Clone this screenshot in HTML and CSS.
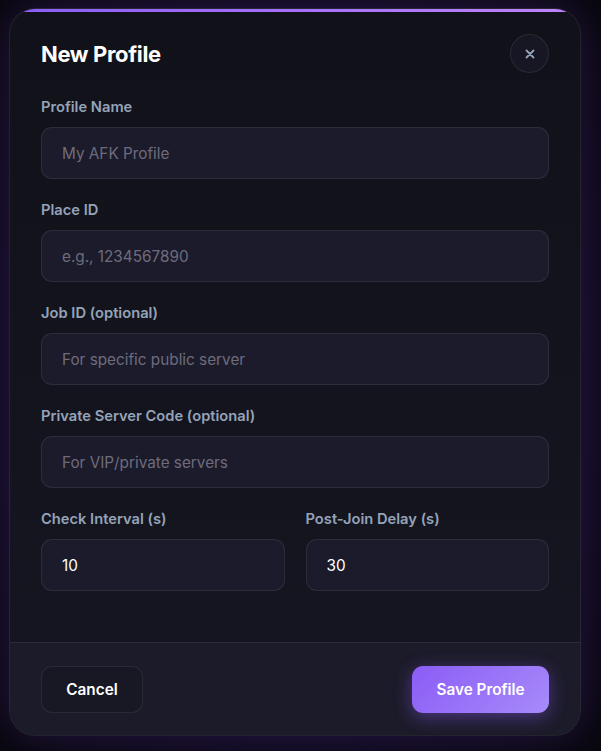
FILE: index.html
```html
<!DOCTYPE html>
<html lang="en">
<head>
    <meta charset="UTF-8">
    <meta name="viewport" content="width=device-width, initial-scale=1.0">
    <title>New Profile</title>
    <link rel="stylesheet" href="styles.css">
</head>
<body>
    <div class="modal">
        <div class="modal-header">
            <h2>New Profile</h2>
            <button class="close-btn" type="button" aria-label="Close">
                <svg width="10" height="10" viewBox="0 0 10 10">
                    <path d="M1.5 1.5 L8.5 8.5 M8.5 1.5 L1.5 8.5" stroke="#94a3b8" stroke-width="1.8" stroke-linecap="round"/>
                </svg>
            </button>
        </div>
        <form class="modal-body">
            <div class="form-group">
                <label for="profileName">Profile Name</label>
                <input type="text" id="profileName" placeholder="My AFK Profile">
            </div>
            <div class="form-group">
                <label for="placeId">Place ID</label>
                <input type="text" id="placeId" placeholder="e.g., 1234567890">
            </div>
            <div class="form-group">
                <label for="jobId">Job ID (optional)</label>
                <input type="text" id="jobId" placeholder="For specific public server">
            </div>
            <div class="form-group">
                <label for="privateCode">Private Server Code (optional)</label>
                <input type="text" id="privateCode" placeholder="For VIP/private servers">
            </div>
            <div class="form-row">
                <div class="form-group">
                    <label for="checkInterval">Check Interval (s)</label>
                    <input type="number" id="checkInterval" value="10">
                </div>
                <div class="form-group">
                    <label for="joinDelay">Post-Join Delay (s)</label>
                    <input type="number" id="joinDelay" value="30">
                </div>
            </div>
        </form>
        <div class="modal-footer">
            <button class="btn btn-cancel" type="button">Cancel</button>
            <button class="btn btn-save" type="button">Save Profile</button>
        </div>
    </div>
</body>
</html>
```

FILE: styles.css
```css
* {
    box-sizing: border-box;
}
body {
    font-family: Inter, "Noto Sans", sans-serif;
    margin: 0;
    padding: 8px 0 0 9px;
    height: 751px;
    overflow: hidden;
    background: radial-gradient(ellipse at 50% 50%, #1b1030 0%, #120b22 55%, #08070d 100%);
}
.modal {
    position: relative;
    width: 572px;
    height: 728px;
    display: flex;
    flex-direction: column;
    background: linear-gradient(180deg, #111119 0%, #161622 100%);
    border: 1px solid rgba(255, 255, 255, 0.08);
    border-radius: 26px;
    overflow: hidden;
    box-shadow: 0 0 40px rgba(110, 60, 200, 0.25);
}
.modal::before {
    content: "";
    position: absolute;
    top: 0;
    left: 0;
    right: 0;
    height: 3px;
    background: linear-gradient(90deg, #8b5cf6, #c084fc);
}
.modal-header {
    display: flex;
    justify-content: space-between;
    align-items: center;
    padding: 25px 31px 0 31px;
}
.modal-header h2 {
    margin: 0;
    font-size: 22px;
    font-weight: 700;
    letter-spacing: -0.35px;
    color: #fff;
}
.close-btn {
    width: 39px;
    height: 39px;
    border-radius: 50%;
    border: 1px solid rgba(255, 255, 255, 0.08);
    background: #171724;
    display: flex;
    align-items: center;
    justify-content: center;
    padding: 0;
    cursor: pointer;
}
.modal-body {
    flex: 1;
    margin: 0;
    padding: 24px 31px 0 31px;
}
.form-group {
    margin-bottom: 21px;
}
.form-row {
    display: grid;
    grid-template-columns: 1fr 1fr;
    gap: 21px;
}
label {
    display: block;
    height: 20px;
    line-height: 20px;
    margin-bottom: 10px;
    font-size: 14.7px;
    font-weight: 600;
    color: #94a3b8;
}
input {
    display: block;
    width: 100%;
    height: 52px;
    padding: 0 20px;
    background: #1c1b2b;
    border: 1px solid rgba(255, 255, 255, 0.08);
    border-radius: 11px;
    font-family: inherit;
    font-size: 15.3px;
    color: #fff;
    outline: none;
    -moz-appearance: textfield;
}
input::placeholder {
    color: #6e6c7c;
}
input::-webkit-outer-spin-button,
input::-webkit-inner-spin-button {
    -webkit-appearance: none;
    margin: 0;
}
.modal-footer {
    display: flex;
    justify-content: space-between;
    align-items: center;
    height: 93px;
    padding: 0 31px;
    background: #1c1b29;
    border-top: 1px solid rgba(255, 255, 255, 0.07);
}
.btn {
    height: 47px;
    border-radius: 11px;
    font-family: inherit;
    font-size: 15.3px;
    font-weight: 600;
    color: #fff;
    cursor: pointer;
}
.btn-cancel {
    width: 102px;
    background: #181724;
    border: 1px solid rgba(255, 255, 255, 0.08);
}
.btn-save {
    width: 137px;
    border: none;
    background: linear-gradient(135deg, #8b5cf6, #a78bfa);
    box-shadow: 0 4px 18px rgba(139, 92, 246, 0.45);
}
```
